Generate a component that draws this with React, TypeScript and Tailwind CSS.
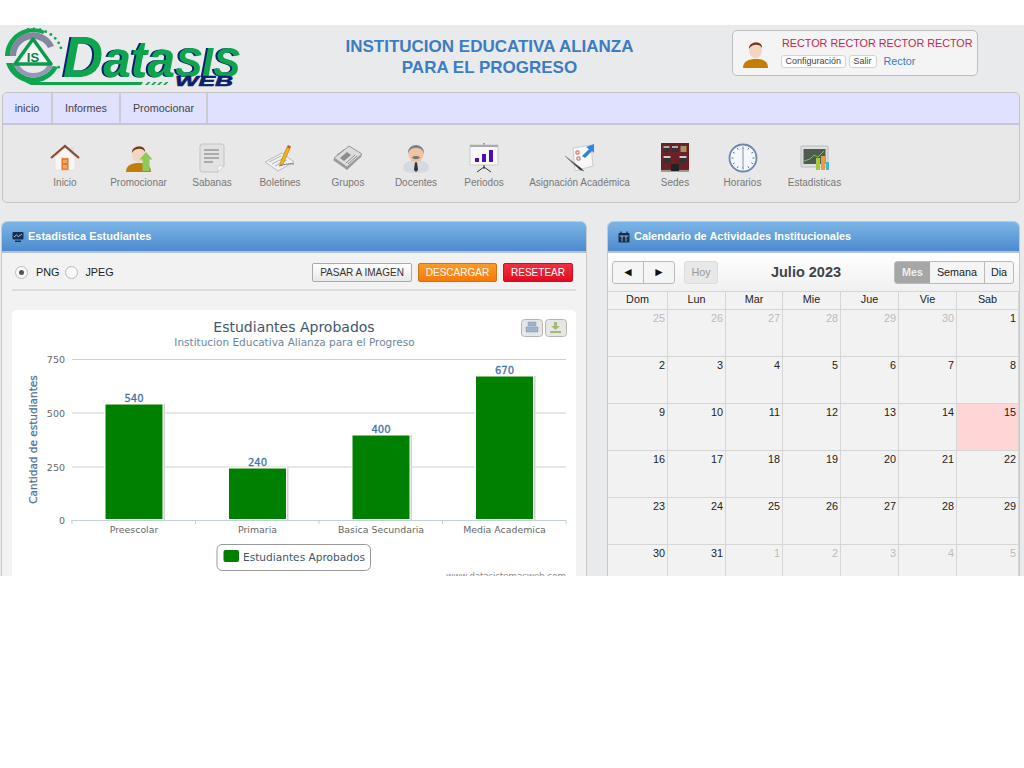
import type { ReactNode } from 'react'

const navItems: { label: string; width: string; icon: ReactNode }[] = [
  { label: 'Inicio', width: 'w-[70px]', icon: <HomeIcon /> },
  { label: 'Promocionar', width: 'w-[77px]', icon: <PersonIcon arrow /> },
  { label: 'Sabanas', width: 'w-[70px]', icon: <SheetIcon /> },
  { label: 'Boletines', width: 'w-[66px]', icon: <BulletinIcon /> },
  { label: 'Grupos', width: 'w-[70px]', icon: <GroupsIcon /> },
  { label: 'Docentes', width: 'w-[66px]', icon: <TeacherIcon /> },
  { label: 'Periodos', width: 'w-[70px]', icon: <BoardIcon /> },
  { label: 'Asignación Académica', width: 'w-[121px]', icon: <AssignIcon /> },
  { label: 'Sedes', width: 'w-[70px]', icon: <BuildingIcon /> },
  { label: 'Horarios', width: 'w-[65px]', icon: <ClockIcon /> },
  { label: 'Estadisticas', width: 'w-[79px]', icon: <StatsIcon /> },
]

const weekDays = ['Dom', 'Lun', 'Mar', 'Mie', 'Jue', 'Vie', 'Sab']

const calendarDays = [
  25, 26, 27, 28, 29, 30, 1,
  2, 3, 4, 5, 6, 7, 8,
  9, 10, 11, 12, 13, 14, 15,
  16, 17, 18, 19, 20, 21, 22,
  23, 24, 25, 26, 27, 28, 29,
  30, 31, 1, 2, 3, 4, 5,
]

const bars = [
  { label: 'Preescolar', value: 540, x: 105, top: 404 },
  { label: 'Primaria', value: 240, x: 228.5, top: 468 },
  { label: 'Basica Secundaria', value: 400, x: 352, top: 435 },
  { label: 'Media Academica', value: 670, x: 475.5, top: 376 },
]

function HomeIcon() {
  return (
    <svg width="30" height="28" viewBox="0 0 30 28">
      <rect x="20" y="3" width="4" height="8" fill="#ddd" />
      <path d="M5 13 L15 4 L25 13 V26 H5 Z" fill="#f8f6f2" stroke="#ddd" strokeWidth="0.6" />
      <path d="M1 14 L15 2 L29 14" fill="none" stroke="#8a4a32" strokeWidth="2.2" />
      <rect x="11.5" y="14" width="7" height="12" fill="#e9772c" stroke="#d8b598" strokeWidth="0.6" />
      <rect x="13" y="16" width="4" height="3" fill="#f4a66c" />
      <rect x="13" y="21" width="4" height="3.5" fill="#f4a66c" />
    </svg>
  )
}

function PersonIcon({ arrow }: { arrow?: boolean }) {
  return (
    <svg width="30" height="30" viewBox="0 0 30 30">
      <path d="M2 29 C2 22 8 20 15 20 C22 20 27 22 27 29 Z" fill="#c37d08" />
      <ellipse cx="14.5" cy="11" rx="6.5" ry="8.5" fill="#f3d6c1" />
      <path d="M8 10 C7 2 22 1 21 9 C19.5 6 16.5 5.5 13.5 6 C10.5 6.5 9 8 8 10 Z" fill="#6c3a24" />
      {arrow && <path d="M22 9 L28.5 16.5 H25.5 V28 H18.5 V16.5 H15.5 Z" fill="#8ccb58" />}
    </svg>
  )
}

function SheetIcon() {
  return (
    <svg width="26" height="30" viewBox="0 0 26 30">
      <path d="M3 1 H23 Q25 1 25 3 V23 L19 29 H3 Q1 29 1 27 V3 Q1 1 3 1 Z" fill="#e2e2e2" stroke="#c4c4c4" />
      <path d="M25 23 H20 Q19 23 19 24 V29 Z" fill="#fafafa" stroke="#c4c4c4" strokeWidth="0.6" />
      <path d="M5 7 H20 M5 11 H20 M5 15 H20 M5 19 H14" stroke="#999" strokeWidth="1.4" />
    </svg>
  )
}

function BulletinIcon() {
  return (
    <svg width="30" height="28" viewBox="0 0 30 28">
      <path d="M0 18 L17 9 L29 18 L13 27 Z" fill="#eef0f5" stroke="#b8bcc6" />
      <path d="M4 18 L16 12 M7 20 L19 14 M10 22 L22 16" stroke="#b5b5b5" />
      <path d="M15 19 L22 3 L25 4.5 L18 20 L15 22 Z" fill="#f2b21b" stroke="#a8761a" strokeWidth="0.6" />
      <path d="M22 3 L23 1 L26 2.5 L25 4.5 Z" fill="#c9503a" />
      <path d="M14 22 C18 21 23 19 29 20" fill="none" stroke="#777" />
    </svg>
  )
}

function GroupsIcon() {
  return (
    <svg width="30" height="26" viewBox="0 0 30 26">
      <path d="M0 15 L16 2 L29 11 L14 25 Z" fill="#9b9b9b" />
      <path d="M1 13 L16 1 L29 9 L14 22 Z" fill="#dcdcdc" stroke="#979797" />
      <path d="M7 13 L14 7 L18 10 L11 16 Z" fill="#8c8c8c" />
      <path d="M13 18 L22 10 M15 19 L24 11 M4 10 L11 5" stroke="#8f8f8f" />
    </svg>
  )
}

function TeacherIcon() {
  return (
    <svg width="26" height="30" viewBox="0 0 26 30">
      <path d="M0 25 C0 19 7 17 13 17 C19 17 26 19 26 25 C26 29 19 30 13 30 C7 30 0 29 0 25 Z" fill="#d5d9e0" />
      <path d="M12 19 H14 L15 27 L13 29 L11 27 Z" fill="#333" />
      <ellipse cx="13" cy="11" rx="7.5" ry="8.5" fill="#f0c3a3" />
      <path d="M5 11 C4 -1 22 -1 21 11 C19.5 6 17 5 13 5 C9 5 6.5 6 5 11 Z" fill="#7b838c" />
      <path d="M9 14 C11 12.5 15 12.5 17 14 C16 17 10 17 9 14 Z" fill="#777" />
    </svg>
  )
}

function BoardIcon() {
  return (
    <svg width="30" height="30" viewBox="0 0 30 30">
      <path d="M15 0 V2" stroke="#555" />
      <rect x="1" y="2" width="28" height="20" fill="#f7f7f7" stroke="#ccc" />
      <rect x="1" y="2" width="28" height="2" fill="#aaa" />
      <rect x="6" y="15" width="4" height="4" fill="#4c0fb0" />
      <rect x="13" y="11" width="4" height="8" fill="#4c0fb0" />
      <rect x="20" y="7" width="4" height="12" fill="#4c0fb0" />
      <path d="M15 22 V26 M15 24 L8 29 M15 24 L22 29" stroke="#333" />
    </svg>
  )
}

function AssignIcon() {
  return (
    <svg width="30" height="30" viewBox="0 0 30 30">
      <path d="M8 5 L26 2 L28 23 L10 28 Z" fill="#f7f7f7" stroke="#ccc" />
      <path d="M11 8 h3 v3 h-3 Z M12 14 h3 v3 h-3 Z" fill="none" stroke="#c65" />
      <path d="M0 13 L16 25 L19 28 L15 27 Z" fill="#333" stroke="#888" strokeWidth="0.6" />
      <path d="M17 13 L24 6 L21 4 L29 1 L29 10 L27 8 L20 15 Z" fill="#2c87dd" />
    </svg>
  )
}

function BuildingIcon() {
  return (
    <svg width="28" height="29" viewBox="0 0 28 29">
      <rect x="0" y="0" width="28" height="28" fill="#6d2025" />
      <rect x="0" y="27" width="28" height="2" fill="#999" />
      <path d="M2.5 3 h6 v6 h-6 Z M11 3 h6 v6 h-6 Z" fill="#333" />
      <path d="M2.5 3 h6 v2 h-6 Z M11 3 h6 v2 h-6 Z" fill="#aaa" />
      <path d="M19.5 3 h6 v6 h-6 Z" fill="#a8935f" />
      <path d="M2.5 13 h7 v7 h-7 Z M18.5 13 h7 v7 h-7 Z" fill="#333" />
      <path d="M2.5 13 h7 v2 h-7 Z M18.5 13 h7 v2 h-7 Z" fill="#ccc" />
      <path d="M10 28 V21 H18 V28 Z" fill="#222" />
    </svg>
  )
}

function ClockIcon() {
  return (
    <svg width="30" height="30" viewBox="0 0 30 30">
      <circle cx="15" cy="15" r="13.5" fill="#f6f7fb" stroke="#6b88b5" strokeWidth="1.8" />
      <path d="M15 5 V15 M15 15 V25" stroke="#9aa3b3" strokeWidth="1.2" />
      <path d="M15 3.5 v2 M15 24.5 v2 M3.5 15 h2 M24.5 15 h2 M9.2 5 l1 1.7 M20.8 5 l-1 1.7 M5 9.2 l1.7 1 M25 9.2 l-1.7 1 M5 20.8 l1.7 -1 M25 20.8 l-1.7 -1 M9.2 25 l1 -1.7 M20.8 25 l-1 -1.7" stroke="#5d7bab" />
    </svg>
  )
}

function StatsIcon() {
  return (
    <svg width="30" height="26" viewBox="0 0 30 26">
      <rect x="1" y="1" width="27" height="21" rx="1" fill="#dedede" stroke="#bbb" />
      <rect x="3.5" y="4" width="22" height="15" fill="#4e5a52" />
      <path d="M4 16 L10 14 L14 10 L18 12 L24 6" fill="none" stroke="#7fbf5e" />
      <rect x="16" y="13" width="4" height="12" fill="#a4c93c" />
      <rect x="21" y="11" width="4" height="14" fill="#eb9b3f" />
      <rect x="26" y="17" width="3" height="8" fill="#45b1dc" />
    </svg>
  )
}

function Logo() {
  const dots = [-100, -88, -76, -64, -52, -40, -28, -16, 28]
  return (
    <svg width="238" height="66" viewBox="0 0 238 66" className="shrink-0 overflow-visible">
      {/* emblem */}
      <path d="M2 29 A28 28 0 0 1 42 4 L40 7 A24 24 0 0 0 7 29 Z" fill="#0fa550" />
      <path d="M7 29 A23 23 0 0 1 51 19 L45 21 A17 17 0 0 0 13 29 Z" fill="#85879f" />
      <path d="M3 36 A28 28 0 0 0 55 40 L50 39 A22 22 0 0 1 10 36 Z" fill="#0fa550" />
      <path d="M10 36 A22 22 0 0 0 50 39 L45 38 A17 17 0 0 1 15 36 Z" fill="#9496b8" />
      {dots.map(a => (
        <circle key={a} cx={30 + 29 * Math.cos((a * Math.PI) / 180)} cy={28 + 26 * Math.sin((a * Math.PI) / 180)} r="1.4" fill="#0fa550" />
      ))}
      <path d="M30 12 L48 37 H12 Z" fill="#f2f6f3" stroke="#0c9a4c" strokeWidth="3.5" strokeLinejoin="round" />
      <text x="30" y="35" fontSize="13" fontWeight="700" textAnchor="middle" fontFamily="Liberation Sans, Arial, sans-serif" fill="#0c7f45">IS</text>
      <path d="M22 55 H140 L138 58 H28 Z" fill="#0fa550" />
      <path d="M142 58 l3 -3 h2.5 l-3 3 Z M148 58 l3 -3 h2.5 l-3 3 Z M154 58 l3 -3 h2.5 l-3 3 Z M160 58 l3 -3 h2.5 l-3 3 Z" fill="#0fa550" />
      {/* wordmark, the navy edge is a shadow of the green letters */}
      <g fontFamily="Liberation Sans, Arial, sans-serif" fontWeight="700" fontStyle="italic">
        <text x="60" y="50" textLength="177" lengthAdjust="spacingAndGlyphs" fill="#0fa550" className="drop-shadow-[-2px_0_0_#0d1f6e]">
          <tspan fontSize="58">D</tspan>
          <tspan fontSize="52">ata</tspan>
          <tspan fontSize="42">SIS</tspan>
        </text>
        <text x="172" y="59" fontSize="14" textLength="58" lengthAdjust="spacingAndGlyphs" fill="#0d1f6e" stroke="#0d1f6e" strokeWidth="0.6">WEB</text>
      </g>
    </svg>
  )
}

function Chart() {
  const chartFont = 'DejaVu Sans, Verdana, sans-serif'
  return (
    <svg width="564" height="270" viewBox="12 310 564 270" className="block" fontFamily={chartFont}>
      <text x="294" y="332" fontSize="14" textAnchor="middle" fill="#3e576f">Estudiantes Aprobados</text>
      <text x="294.5" y="346" fontSize="10.5" textAnchor="middle" fill="#6d869f">Institucion Educativa Alianza para el Progreso</text>

      <rect x="521.5" y="319.5" width="21" height="17" rx="3" fill="#e6e6e6" stroke="#b5b5b5" />
      <path d="M528 322 h8 v4 h-8 Z M526 327 h12 v5 h-12 Z" fill="#9fb2cc" stroke="#8399b5" strokeWidth="0.5" />
      <rect x="545.5" y="319.5" width="21" height="17" rx="3" fill="#e6e6e6" stroke="#b5b5b5" />
      <path d="M554 322 h3 v4 h3 l-4.5 4 l-4.5 -4 h3 Z M550 331 h11 v2 h-11 Z" fill="#a8b878" />

      {[359.5, 413, 467].map(y => (
        <line key={y} x1="72" x2="566" y1={y} y2={y} stroke="#cfcfcf" strokeWidth="1.2" />
      ))}
      <line x1="72" x2="566" y1="520.5" y2="520.5" stroke="#c0d0e0" />
      {[72, 195.5, 319, 442.5, 566].map(x => (
        <line key={x} x1={x} x2={x} y1="520" y2="524" stroke="#c0d0e0" />
      ))}

      {[['750', 363], ['500', 417], ['250', 471], ['0', 524]].map(([label, y]) => (
        <text key={label} x="65" y={y} fontSize="9.5" textAnchor="end" fill="#666">{label}</text>
      ))}
      <text x="0" y="0" fontSize="10.5" textAnchor="middle" fill="#4d759e" stroke="#4d759e" strokeWidth="0.25" transform="translate(37 439.5) rotate(-90)">Cantidad de estudiantes</text>

      {bars.map(bar => (
        <g key={bar.label}>
          <rect x={bar.x + 1} y={bar.top} width="59" height={520 - bar.top} fill="#d2d2d2" />
          <rect x={bar.x} y={bar.top} width="58" height={519.5 - bar.top} fill="#008000" stroke="#fff" />
          <text x={bar.x + 29} y={bar.top - 2.5} fontSize="10" textAnchor="middle" fill="#4572a7" stroke="#4572a7" strokeWidth="0.3">{bar.value}</text>
          <text x={bar.x + 29} y="533" fontSize="9.4" textAnchor="middle" fill="#666">{bar.label}</text>
        </g>
      ))}

      <rect x="217" y="544.5" width="153.5" height="26" rx="5" fill="#fff" stroke="#999" />
      <rect x="223.5" y="550" width="15.5" height="12" rx="2" fill="#008000" />
      <text x="243" y="561" fontSize="10.6" fill="#3e576f">Estudiantes Aprobados</text>
      <text x="446" y="579" fontSize="9" textLength="120" fill="#909090">www.datasistemasweb.com</text>
    </svg>
  )
}

function PanelHeader({ title, icon }: { title: string; icon: ReactNode }) {
  return (
    <div className="flex h-[31px] items-center gap-[4px] rounded-t-[5px] border-b-2 border-[#b9c2cc] bg-gradient-to-b from-[#7cb5e5] to-[#4d8bcd] pl-[10px] text-[11px] font-bold text-white">
      {icon}
      <span>{title}</span>
    </div>
  )
}

export default function App() {
  return (
    <div className="pt-[25px] font-['Liberation_Sans',Arial,sans-serif]">
      <div className="h-[551px] overflow-hidden bg-[#e9eaec]">
        {/* header */}
        <div className="flex h-[67px] items-start pl-[3px] pt-[2px]">
          <Logo />
          <div className="ml-[6px] mt-[9px] w-[485px] text-center text-[17px] font-bold leading-[21px] text-[#3b7cc3]">
            <div>INSTITUCION EDUCATIVA ALIANZA</div>
            <div>PARA EL PROGRESO</div>
          </div>
          <div className="mt-[3px] flex h-[46px] w-[246px] rounded-[5px] border border-[#bdbdbd] bg-[#f4f4f4] pl-[8px]">
            <div className="mt-[8px] shrink-0"><PersonIcon /></div>
            <div className="ml-[11px] mt-[5px]">
              <div className="whitespace-nowrap text-[10.8px] leading-[14px] text-[#c0284f]">RECTOR RECTOR RECTOR RECTOR</div>
              <div className="-ml-[1px] mt-[5px] flex items-center">
                <span className="rounded-[3px] border border-[#d4d4d4] bg-white px-[3.5px] text-[9px] leading-[11px] text-[#444]">Configuración</span>
                <span className="ml-[3px] rounded-[3px] border border-[#d4d4d4] bg-white px-[4px] text-[9px] leading-[11px] text-[#444]">Salir</span>
                <span className="ml-[7px] text-[10.8px] leading-[13px] text-[#3b7cc3]">Rector</span>
              </div>
            </div>
          </div>
        </div>

        {/* menu */}
        <div className="ml-[2px] mr-[4px] h-[111px] rounded-[5px] border border-[#c4c4c4] bg-[#e8e8e8]">
          <div className="flex h-[32px] rounded-t-[5px] border-b-2 border-[#c6c6d6] bg-[#e0e0ff] text-[10.8px] text-[#444]">
            <div className="flex w-[50px] items-center justify-center border-r-2 border-[#ccc]">inicio</div>
            <div className="flex w-[68px] items-center justify-center border-r-2 border-[#ccc]">Informes</div>
            <div className="flex w-[87px] items-center justify-center border-r-2 border-[#ccc]">Promocionar</div>
          </div>
          <div className="flex pl-[27px] pt-[17px]">
            {navItems.map(item => (
              <div key={item.label} className={`${item.width} flex flex-col items-center`}>
                <div className="flex h-[31px] items-center justify-center">{item.icon}</div>
                <span className="mt-[4px] whitespace-nowrap text-[10px] leading-[12px] text-[#777]">{item.label}</span>
              </div>
            ))}
          </div>
        </div>

        {/* content */}
        <div className="ml-[1px] mr-[4px] mt-[18px] flex justify-between">
          <div className="h-[400px] w-[586px] rounded-t-[6px] border border-[#c9c9c9] bg-[#f2f2f2]">
            <PanelHeader
              title="Estadistica Estudiantes"
              icon={
                <svg width="12" height="12" viewBox="0 0 12 12">
                  <rect x="0.5" y="1" width="11" height="7.5" rx="1" fill="#15304f" />
                  <path d="M2 6 L4.5 4 L6.5 5.5 L10 3" stroke="#cfe2f5" fill="none" strokeWidth="0.8" />
                  <rect x="3" y="9.5" width="6" height="1.5" fill="#15304f" />
                </svg>
              }
            />
            <div className="mx-[10px] flex h-[38px] items-center border-b-2 border-[#ddd] pt-[2px] text-[10.8px] text-[#222]">
              <span className="ml-[3px] flex h-[13px] w-[13px] items-center justify-center rounded-full border border-[#bbb] bg-[#f8f8f8]">
                <span className="h-[5px] w-[5px] rounded-full bg-[#555]" />
              </span>
              <span className="ml-[8px]">PNG</span>
              <span className="ml-[6px] h-[13px] w-[13px] rounded-full border border-[#bbb] bg-[#f8f8f8]" />
              <span className="ml-[7px]">JPEG</span>
              <div className="ml-auto mr-[3px] flex gap-[6px] text-[10px]">
                <span className="flex h-[19px] w-[100px] items-center justify-center rounded-[2px] border border-[#aaa] bg-gradient-to-b from-white to-[#e8e8e8] text-[#333]">PASAR A IMAGEN</span>
                <span className="flex h-[19px] w-[79px] items-center justify-center rounded-[2px] border border-[#c7761a] bg-gradient-to-b from-[#fb9a28] to-[#f67a06] text-white">DESCARGAR</span>
                <span className="flex h-[19px] w-[70px] items-center justify-center rounded-[2px] border border-[#c41230] bg-gradient-to-b from-[#ee2f40] to-[#e3061f] text-white">RESETEAR</span>
              </div>
            </div>
            <div className="mx-[10px] mt-[19px] h-[300px] rounded-[5px] bg-white">
              <Chart />
            </div>
          </div>

          <div className="h-[400px] w-[413px] rounded-t-[6px] border border-[#c9c9c9] bg-[#f2f2f2]">
            <PanelHeader
              title="Calendario de Actividades Institucionales"
              icon={
                <svg width="12" height="12" viewBox="0 0 12 12">
                  <rect x="0.5" y="2" width="11" height="9.5" rx="1" fill="#15304f" />
                  <path d="M3 0.5 V3 M9 0.5 V3" stroke="#15304f" strokeWidth="1.4" />
                  <path d="M1.5 5 H10.5 M4 5 V10.5 M8 5 V10.5" stroke="#cfe2f5" strokeWidth="0.7" />
                </svg>
              }
            />
            <div className="flex h-[38px] items-center bg-gradient-to-b from-white to-[#f0f0f0] pl-[4px] pr-[4px] text-[10.8px]">
              <div className="flex h-[23px] w-[63px] rounded-[3px] border border-[#bbb] bg-[#f5f5f5] text-[#111]">
                <span className="flex flex-1 items-center justify-center border-r border-[#bbb] text-[12px]">◄</span>
                <span className="flex flex-1 items-center justify-center text-[12px]">►</span>
              </div>
              <span className="ml-[9px] flex h-[23px] w-[34px] items-center justify-center rounded-[3px] border border-[#ddd] bg-[#e8e8e8] text-[#999]">Hoy</span>
              <span className="w-[176px] pt-[2px] text-center text-[14.5px] font-bold text-[#444]">Julio 2023</span>
              <div className="flex h-[23px] w-[120px] overflow-hidden rounded-[3px] border border-[#bbb] bg-[#f5f5f5] text-[#222]">
                <span className="flex w-[35px] items-center justify-center bg-[#a6a6a6] font-bold text-[#eee]">Mes</span>
                <span className="flex w-[55px] items-center justify-center border-r border-[#bbb]">Semana</span>
                <span className="flex flex-1 items-center justify-center">Dia</span>
              </div>
            </div>
            <div className="grid grid-cols-[60px_58px_57px_58px_58px_58px_1fr] border-t border-[#d6d6d6] text-[10.8px]">
              {weekDays.map(day => (
                <div key={day} className="flex h-[18px] items-center justify-center border-b border-r border-[#d6d6d6] pb-[2px] text-[#222]">{day}</div>
              ))}
              {calendarDays.map((day, i) => {
                const outside = i < 6 || i > 36
                const today = i === 20
                return (
                  <div
                    key={i}
                    className={`h-[47px] border-b border-r border-[#d6d6d6] pr-[2px] text-right leading-[16px] ${today ? 'bg-[#ffd5d5]' : ''} ${outside ? 'text-[#bbb]' : 'text-[#222]'}`}
                  >
                    {day}
                  </div>
                )
              })}
            </div>
          </div>
        </div>
      </div>
    </div>
  )
}
